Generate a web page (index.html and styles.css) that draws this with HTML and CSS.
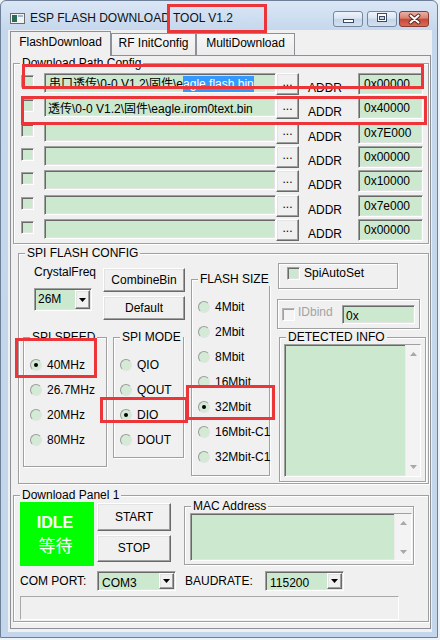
FILE: index.html
```html
<!DOCTYPE html>
<html>
<head>
<meta charset="utf-8">
<link rel="stylesheet" href="styles.css">
</head>
<body>
<div class="window">
  <div class="titlebar">
    <svg class="app-icon" width="15" height="11" viewBox="0 0 15 11"><rect x="0.5" y="0.5" width="14" height="10" fill="#f2f2f2" stroke="#6b6b6b"/><rect x="2" y="2" width="5" height="7" fill="#2e6a58"/><rect x="8" y="2" width="5" height="2" fill="#9fb7cf"/></svg>
    <span class="title">ESP FLASH DOWNLOAD TOOL V1.2</span>
    <div class="caption">
      <div class="cbtn"><svg width="28" height="14" viewBox="0 0 28 14"><rect x="9.5" y="7.5" width="10" height="3" fill="#fff" stroke="#3a4b63"/></svg></div>
      <div class="cbtn max"><svg width="28" height="14" viewBox="0 0 28 14"><rect x="9.5" y="1.5" width="9" height="8" fill="#fff" stroke="#3a4b63"/><rect x="11.5" y="4.5" width="5" height="3" fill="#c5d3e4" stroke="#3a4b63"/></svg></div>
      <div class="cbtn close"><svg width="28" height="14" viewBox="0 0 28 14"><path d="M10.5 3.5 L18.5 10.5 M18.5 3.5 L10.5 10.5" stroke="#5a2a22" stroke-width="4" stroke-linecap="round"/><path d="M10.5 3.5 L18.5 10.5 M18.5 3.5 L10.5 10.5" stroke="#fff" stroke-width="2" stroke-linecap="round"/></svg></div>
    </div>
  </div>
  <div class="client">
    <div class="tabs">
      <div class="tab t1 active">FlashDownload</div>
      <div class="tab t2">RF InitConfig</div>
      <div class="tab t3">MultiDownload</div>
    </div>
    <div class="panel">
      <div class="group dl">
        <span class="glabel">Download Path Config</span>
        <div class="row">
          <span class="chk"></span>
          <div class="edit path"><span class="r1"> 串口透传\0-0 V1.2\固件\e<span class="sel">agle.flash.bin</span></span></div>
          <div class="btn dots">...</div>
          <span class="addr-lbl">ADDR</span>
          <div class="edit addr">0x00000</div>
        </div>
        <div class="row">
          <span class="chk"></span>
          <div class="edit path"><span>透传\0-0 V1.2\固件\eagle.irom0text.bin</span></div>
          <div class="btn dots">...</div>
          <span class="addr-lbl">ADDR</span>
          <div class="edit addr">0x40000</div>
        </div>
        <div class="row">
          <span class="chk"></span>
          <div class="edit path"></div>
          <div class="btn dots">...</div>
          <span class="addr-lbl">ADDR</span>
          <div class="edit addr">0x7E000</div>
        </div>
        <div class="row">
          <span class="chk"></span>
          <div class="edit path"></div>
          <div class="btn dots">...</div>
          <span class="addr-lbl">ADDR</span>
          <div class="edit addr">0x00000</div>
        </div>
        <div class="row">
          <span class="chk"></span>
          <div class="edit path"></div>
          <div class="btn dots">...</div>
          <span class="addr-lbl">ADDR</span>
          <div class="edit addr">0x10000</div>
        </div>
        <div class="row">
          <span class="chk"></span>
          <div class="edit path"></div>
          <div class="btn dots">...</div>
          <span class="addr-lbl">ADDR</span>
          <div class="edit addr">0x7e000</div>
        </div>
        <div class="row">
          <span class="chk"></span>
          <div class="edit path"></div>
          <div class="btn dots">...</div>
          <span class="addr-lbl">ADDR</span>
          <div class="edit addr">0x00000</div>
        </div>
      </div>

      <div class="group spi">
        <span class="glabel">SPI FLASH CONFIG</span>
        <div class="colA">
          <div class="atop">
            <div class="crystal">
              <span class="lbl">CrystalFreq</span>
              <div class="combo c26"><span class="ctext">26M</span><span class="btn dd"><svg width="7" height="4" viewBox="0 0 7 4"><polygon points="0,0 7,0 3.5,4" fill="#000"/></svg></span></div>
            </div>
            <div class="abtns">
              <div class="btn">CombineBin</div>
              <div class="btn">Default</div>
            </div>
          </div>
          <div class="abot">
            <div class="group speed">
              <span class="glabel">SPI SPEED</span>
              <div class="radio-row"><span class="rb on"></span>40MHz</div>
              <div class="radio-row"><span class="rb"></span>26.7MHz</div>
              <div class="radio-row"><span class="rb"></span>20MHz</div>
              <div class="radio-row"><span class="rb"></span>80MHz</div>
            </div>
            <div class="group mode">
              <span class="glabel">SPI MODE</span>
              <div class="radio-row"><span class="rb"></span>QIO</div>
              <div class="radio-row"><span class="rb"></span>QOUT</div>
              <div class="radio-row"><span class="rb on"></span>DIO</div>
              <div class="radio-row"><span class="rb"></span>DOUT</div>
            </div>
          </div>
        </div>
        <div class="group fsize">
          <span class="glabel">FLASH SIZE</span>
          <div class="radio-row r25"><span class="rb"></span>4Mbit</div>
          <div class="radio-row r25"><span class="rb"></span>2Mbit</div>
          <div class="radio-row r25"><span class="rb"></span>8Mbit</div>
          <div class="radio-row r25"><span class="rb"></span>16Mbit</div>
          <div class="radio-row r25"><span class="rb on"></span>32Mbit</div>
          <div class="radio-row r25"><span class="rb"></span>16Mbit-C1</div>
          <div class="radio-row r25"><span class="rb"></span>32Mbit-C1</div>
        </div>
        <div class="colC">
          <div class="group autoset"><span class="chk"></span><span class="cap">SpiAutoSet</span></div>
          <div class="group idbind"><span class="chk dis"></span><span class="cap gray">IDbind</span><div class="edit idin">0x</div></div>
          <div class="group detect">
            <span class="glabel">DETECTED INFO</span>
            <div class="edit ta tdet">
              <div class="sb">
                <svg width="7" height="4" viewBox="0 0 7 4"><polygon points="0,4 7,4 3.5,0" fill="#a8a8a8"/></svg>
                <svg width="7" height="4" viewBox="0 0 7 4"><polygon points="0,0 7,0 3.5,4" fill="#a8a8a8"/></svg>
              </div>
            </div>
          </div>
        </div>
      </div>

      <div class="group dlp">
        <span class="glabel">Download Panel 1</span>
        <div class="prow1">
          <div class="idle"><span class="idle-en">IDLE</span><span class="idle-cn">等待</span></div>
          <div class="pbtns">
            <div class="btn start">START</div>
            <div class="btn stop">STOP</div>
          </div>
          <div class="group mac">
            <span class="glabel">MAC Address</span>
            <div class="edit ta tmac">
              <div class="sb sbmac">
                <svg width="7" height="4" viewBox="0 0 7 4"><polygon points="0,4 7,4 3.5,0" fill="#a8a8a8"/></svg>
                <svg width="7" height="4" viewBox="0 0 7 4"><polygon points="0,0 7,0 3.5,4" fill="#a8a8a8"/></svg>
              </div>
            </div>
          </div>
        </div>
        <div class="prow2">
          <span class="lbl-com">COM PORT:</span>
          <div class="combo com"><span class="ctext low">COM3</span><span class="btn dd"><svg width="7" height="4" viewBox="0 0 7 4"><polygon points="0,0 7,0 3.5,4" fill="#000"/></svg></span></div>
          <span class="lbl-baud">BAUDRATE:</span>
          <div class="combo com"><span class="ctext low">115200</span><span class="btn dd"><svg width="7" height="4" viewBox="0 0 7 4"><polygon points="0,0 7,0 3.5,4" fill="#000"/></svg></span></div>
        </div>
        <div class="status"></div>
      </div>
    </div>
  </div>
</div>
<div class="mark m1"></div>
<div class="mark m2"></div>
<div class="mark m3"></div>
<div class="mark m4"></div>
<div class="mark m5"></div>
<div class="mark m6"></div>
</body>
</html>
```
FILE: styles.css
```css
* { box-sizing: border-box; }
html, body { margin: 0; padding: 0; }
body {
  width: 440px;
  height: 640px;
  overflow: hidden;
  position: relative;
  background: #eef3f8;
  font-family: "Liberation Sans", Arial, "Noto Sans CJK SC", sans-serif;
  font-size: 12px;
  color: #000;
}

.window {
  width: 438px;
  height: 638px;
  border: 1px solid #6e8097;
  border-radius: 6px 6px 0 0;
  background: linear-gradient(#dae6f5 0, #c5d7ed 30px, #c4d6ec 100%);
  display: flex;
  flex-direction: column;
}

.titlebar {
  height: 29px;
  flex: none;
  display: flex;
  align-items: center;
  padding: 5px 8px 0 9px;
}
.app-icon { flex: none; display: block; }
.title { margin-left: 5px; line-height: 14px; color: #111; white-space: nowrap; }
.caption { margin-left: auto; align-self: flex-start; margin-top: 5px; display: flex; }
.cbtn {
  width: 30px;
  height: 16px;
  border: 1px solid #76869d;
  border-radius: 3px;
  background: linear-gradient(#eef3fa 0%, #dbe6f3 45%, #c4d5e9 50%, #d3e1f1 100%);
}
.cbtn svg { display: block; }
.cbtn.max { margin-left: 4px; }
.cbtn.close {
  margin-left: 2px;
  border-color: #8c3a30;
  background: linear-gradient(#eab1a6 0%, #d9806f 45%, #c84735 50%, #d56c57 100%);
}

.client {
  flex: none;
  margin-left: 7px;
  width: 424px;
  height: 602px;
  background: #f0f0f0;
  padding-left: 2px;
}

.tabs { display: flex; align-items: flex-end; height: 25px; }
.tab {
  height: 22px;
  border: 1px solid #8d9096;
  border-bottom: none;
  background: linear-gradient(#f7f7f7, #ebebeb);
  text-align: center;
  line-height: 19px;
  white-space: nowrap;
}
.tab.active {
  height: 25px;
  margin-bottom: -1px;
  position: relative;
  z-index: 1;
  background: #f0f0f0;
  line-height: 21px;
}
.t1 { width: 101px; }
.t2 { width: 85px; }
.t3 { width: 99px; }

.panel {
  width: 421px;
  height: 574px;
  border: 1px solid #8d9096;
  background: #f0f0f0;
}

/* etched group box */
.group {
  position: relative;
  border: 1px solid #a0a0a0;
  box-shadow: inset 1px 1px 0 #fff, 1px 1px 0 #fff;
}
.glabel {
  position: absolute;
  left: 6px;
  top: -8px;
  padding: 0 2px;
  line-height: 14px;
  background: #f0f0f0;
  white-space: nowrap;
}

/* sunken controls */
.edit, .chk, .combo, .ta {
  border: 1px solid;
  border-color: #a0a0a0 #fff #fff #a0a0a0;
  box-shadow: inset 1px 1px 0 #696969, inset -1px -1px 0 #e3e3e3;
  background: #cce8cf;
}
.btn {
  background: #f0f0f0;
  border: 1px solid;
  border-color: #fff #696969 #696969 #fff;
  box-shadow: inset -1px -1px 0 #a0a0a0, inset 1px 1px 0 #e3e3e3;
  text-align: center;
  white-space: nowrap;
}

.chk { display: block; flex: none; width: 13px; height: 13px; }
.chk.dis { background: #f4f4f4; border-color: #b5b5b5 #fff #fff #b5b5b5; box-shadow: inset 1px 1px 0 #a0a0a0; }

.rb {
  flex: none;
  width: 12px;
  height: 12px;
  margin-right: 5px;
  border-radius: 50%;
  border: 1px solid;
  border-color: #9a9a9a #e2e2e2 #e2e2e2 #9a9a9a;
  background: #d3ebd5;
  display: flex;
  align-items: center;
  justify-content: center;
}
.rb.on::after {
  content: "";
  width: 4px;
  height: 4px;
  border-radius: 50%;
  background: #000;
}

/* Download Path Config */
.dl {
  margin: 7px 0 0 2px;
  width: 416px;
  height: 181px;
  padding: 9px 0 0 7px;
}
.row { display: flex; align-items: flex-start; height: 24.33px; }
.row .chk { margin-top: 2px; }
.edit { display: flex; align-items: center; white-space: nowrap; overflow: hidden; }
.path { margin-left: 10px; width: 232px; height: 20px; padding-left: 3px; flex: none; }
.r1 { padding-left: 1px; }
.sel { background: #3399ff; color: #fff; display: inline-block; line-height: 17px; }
.dots { width: 23px; height: 22px; line-height: 16px; flex: none; }
.addr-lbl { flex: none; width: 59px; padding: 8px 0 0 9px; line-height: 14px; }
.addr { flex: none; width: 65px; height: 22px; padding-left: 5px; }

/* SPI FLASH CONFIG */
.spi {
  margin: 9px 0 0 7px;
  width: 411px;
  height: 231px;
  display: flex;
  align-items: flex-start;
  padding-left: 4px;
}
.colA { width: 163px; flex: none; }
.atop { display: flex; height: 83px; }
.crystal { width: 80px; padding: 11px 0 0 11px; }
.lbl { display: block; line-height: 14px; white-space: nowrap; }
.combo { display: flex; padding: 1px; }
.c26 { margin-top: 9px; width: 58px; height: 23px; }
.ctext { flex: 1; padding-left: 2px; line-height: 19px; }
.ctext.low { padding-left: 3px; padding-top: 3px; line-height: 14px; }
.dd { flex: none; width: 15px; display: flex; align-items: center; justify-content: center; }
.dd svg { display: block; }
.abtns { width: 82px; padding-top: 14px; display: flex; flex-direction: column; gap: 4px; }
.abtns .btn { height: 24px; line-height: 22px; }

.abot { display: flex; align-items: flex-start; }
.speed { width: 84px; height: 130px; padding: 15px 0 0 6px; }
.mode { margin-left: 6px; width: 71px; height: 121px; padding: 15px 0 0 6px; }
.radio-row { display: flex; align-items: center; height: 24.75px; white-space: nowrap; }
.radio-row.r25 { height: 25px; }
.fsize { flex: none; margin: 25px 0 0 5px; width: 79px; height: 197px; padding: 14px 0 0 6px; }

.colC { flex: none; margin-left: 7px; width: 150px; }
.autoset {
  margin: 9px 0 0 1px;
  width: 120px;
  height: 26px;
  display: flex;
  align-items: center;
  padding: 3px 0 0 8px;
  align-items: flex-start;
}
.cap { line-height: 13px; margin-left: 4px; white-space: nowrap; }
.cap.gray { color: #a3a3a3; margin-left: 3px; margin-top: 1px; }
.idbind {
  margin-top: 10px;
  width: 143px;
  height: 30px;
  display: flex;
  align-items: flex-start;
  padding: 5px 4px 0 4px;
}
.idbind .chk { margin-top: 3px; }
.idin { margin-left: auto; width: 73px; height: 19px; padding: 2px 0 0 3px; }
.detect { margin: 8px 0 0 2px; width: 147px; height: 145px; padding: 6px 0 0 4px; }
.ta { display: flex; justify-content: flex-end; }
.tdet { width: 137px; height: 133px; }
.sb {
  width: 15px;
  height: 100%;
  background: #f3f3f3;
  border-left: 1px solid #ececec;
  display: flex;
  flex-direction: column;
  justify-content: space-between;
  align-items: center;
  padding: 7px 0 7px;
}
.sb svg { display: block; }
.sbmac { width: 17px; padding: 7px 0 6px; }

/* Download Panel 1 */
.dlp { margin: 11px 0 0 2px; width: 416px; height: 127px; padding: 6px 0 0 6px; }
.prow1 { display: flex; align-items: flex-start; }
.idle {
  flex: none;
  width: 74px;
  height: 64px;
  background: #00ff00;
  color: #fff;
  display: flex;
  flex-direction: column;
  align-items: center;
  justify-content: center;
}
.idle-en { font-weight: bold; font-size: 16px; line-height: 22px; margin-right: 4px; }
.idle-cn { font-family: "Noto Sans CJK SC", sans-serif; font-size: 17px; line-height: 22px; margin-right: 3px; }
.pbtns { flex: none; margin: 1px 0 0 3px; width: 74px; display: flex; flex-direction: column; gap: 4px; }
.start { height: 28px; line-height: 26px; }
.stop { height: 27px; line-height: 25px; }
.mac { flex: none; margin: 4px 0 0 13px; width: 230px; height: 59px; padding: 6px 0 0 5px; }
.tmac { width: 222px; height: 48px; }
.prow2 { display: flex; align-items: center; margin-top: 5px; height: 20px; }
.lbl-com { width: 77px; white-space: nowrap; }
.lbl-baud { margin-left: 9px; width: 80px; white-space: nowrap; }
.com { width: 79px; height: 20px; }
.status {
  margin-top: 5px;
  width: 379px;
  height: 24px;
  border: 1px solid;
  border-color: #a9a9a9 #fff #fff #a9a9a9;
  background: #f0f0f0;
}

/* red annotation marks */
.mark { position: absolute; border: 3px solid #ec3538; }
.m1 { left: 167px; top: 4px; width: 100px; height: 29px; }
.m2 { left: 22px; top: 64px; width: 402px; height: 25px; }
.m3 { left: 21px; top: 96px; width: 406px; height: 29px; }
.m4 { left: 15px; top: 338px; width: 82px; height: 40px; }
.m5 { left: 100px; top: 397px; width: 88px; height: 26px; }
.m6 { left: 186px; top: 385px; width: 89px; height: 35px; }
```
